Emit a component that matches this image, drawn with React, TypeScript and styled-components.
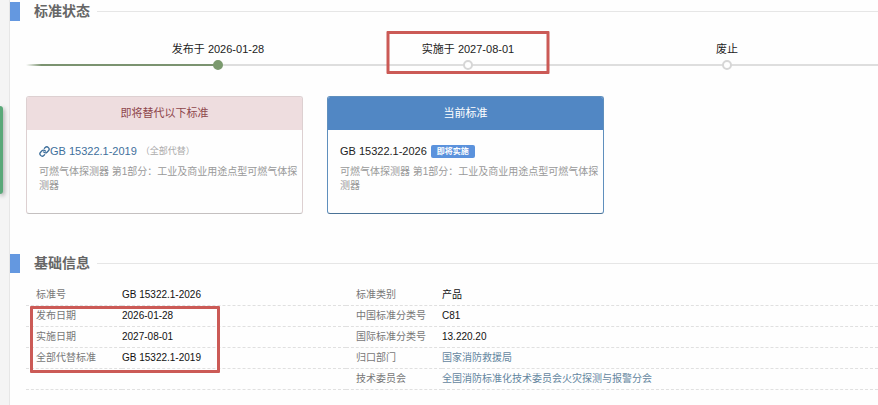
import React from "react";
import styled, { createGlobalStyle } from "styled-components";
import { Link } from "lucide-react";

const GlobalStyle = createGlobalStyle`
  *, *::before, *::after { box-sizing: border-box; }
  body {
    margin: 0;
    background: #f4f4f4;
    color: #222;
    font-family: "Liberation Sans", "Noto Sans CJK SC", sans-serif;
    font-size: 11px;
  }
  a { text-decoration: none; }
  a:hover { text-decoration: underline; }
`;

const Page = styled.div`
  position: relative;
  min-height: 100vh;
  padding-left: 9px;
  overflow: hidden;
`;

const SideTab = styled.button`
  position: absolute;
  left: 0;
  top: 106px;
  width: 3px;
  height: 88px;
  padding: 0;
  border: 0;
  border-radius: 0 3px 3px 0;
  background: #59a878;
  box-shadow: 1px 2px 4px rgba(0, 0, 0, 0.4);
`;

const Panel = styled.main`
  min-height: 100vh;
  padding-top: 1px;
  border-left: 1px solid #e6e6e6;
  background: #fefefe;
`;

const SectionHeader = styled.header`
  display: flex;
  align-items: center;
  height: 20px;

  &::before {
    content: "";
    width: 10px;
    height: 19px;
    margin-right: 14px;
    background: #6498e0;
  }

  &::after {
    content: "";
    flex: 1;
    height: 1px;
    margin-left: 7px;
    background: #e6e6e6;
  }
`;

const SectionTitle = styled.h2`
  margin: 0;
  color: #666;
  font-size: 14px;
  line-height: 20px;
`;

const SectionBody = styled.div`
  padding-left: 16px;
`;

const Timeline = styled.ol`
  position: relative;
  display: grid;
  grid-template-columns: 250fr 250fr 268fr;
  margin: 0;
  padding: 20px 17px 0 67px;
  list-style: none;
`;

const Track = styled.li<{ $done?: boolean }>`
  position: absolute;
  left: 0;
  bottom: 4px;
  width: ${(p) => (p.$done ? "192px" : "100%")};
  height: 2px;
  background: ${(p) => (p.$done ? "linear-gradient(to right, #fefefe, #7b9370 8%)" : "#dedede")};
`;

const Step = styled.li`
  position: relative;
  display: flex;
  flex-direction: column;
  align-items: center;
  gap: 3px;
  line-height: 16px;
`;

const Dot = styled.span<{ $done?: boolean }>`
  width: 10px;
  height: 10px;
  border: 2px solid ${(p) => (p.$done ? "#7b9a6e" : "#d6d6d6")};
  border-radius: 50%;
  background: ${(p) => (p.$done ? "#7b9a6e" : "#fefefe")};
`;

const StepMark = styled.span`
  position: absolute;
  left: 50%;
  top: -10px;
  width: 163px;
  height: 43px;
  transform: translateX(-50%);
  border: 3px solid #cb5a56;
  border-radius: 1px;
`;

const Cards = styled.div`
  display: flex;
  gap: 24px;
  padding: 26px 16px 39px 0;
`;

const Card = styled.article<{ $current?: boolean }>`
  flex: 0 1 277px;
  min-height: 118px;
  border: 1px solid ${(p) => (p.$current ? "#5f8fbd" : "#ddd0d1")};
  border-bottom-color: ${(p) => (p.$current ? "#4a7296" : "#c4c0c0")};
  border-radius: 3px;
  overflow: hidden;
`;

const CardTitle = styled.h3<{ $current?: boolean }>`
  margin: 0;
  background: ${(p) => (p.$current ? "#5187c4" : "#eedddf")};
  color: ${(p) => (p.$current ? "#fff" : "#8e474c")};
  font-size: 11px;
  font-weight: 400;
  line-height: 33px;
  text-align: center;
`;

const CardBody = styled.div`
  padding: 13px 3px 0 12px;
`;

const CodeLine = styled.div`
  display: flex;
  align-items: center;
  height: 16px;
  line-height: 16px;
`;

const CodeLink = styled.a`
  display: flex;
  align-items: center;
  color: #3f709c;
`;

const Note = styled.span`
  margin-left: 4px;
  color: #aaa;
  font-size: 9px;
`;

const Badge = styled.span`
  margin-left: 4px;
  padding: 0 6px;
  border-radius: 2px;
  background: #5b92dc;
  color: #fff;
  font-size: 8px;
  font-weight: 700;
  line-height: 13px;
`;

const Description = styled.p`
  margin: 6px 0 0;
  color: #999;
  font-size: 10px;
  line-height: 14px;
`;

const InfoArea = styled.div`
  position: relative;
  padding: 12px 0 0 16px;
`;

const InfoTable = styled.table`
  width: 100%;
  border-collapse: separate;
  border-spacing: 0;
  table-layout: fixed;
  font-size: 10px;
  line-height: 20px;

  th, td {
    height: 21px;
    padding: 0;
    border-bottom: 1px dashed #e0e0e0;
    text-align: left;
    font-weight: 400;
    white-space: nowrap;
  }
  th { padding-left: 10px; color: #777; }
  td { color: #111; }
`;

const LabelCol = styled.col`
  width: 96px;
`;

const ValueCol = styled.col<{ $first?: boolean }>`
  width: ${(p) => (p.$first ? "224px" : "auto")};
`;

const ValueLink = styled.a`
  color: #64869f;
`;

const TableMark = styled.span`
  position: absolute;
  left: 20px;
  top: 33px;
  width: 190px;
  height: 67px;
  border: 3px solid #cb5a56;
  border-radius: 1px;
`;

const steps = [
  { label: "发布于 2026-01-28", done: true },
  { label: "实施于 2027-08-01", marked: true },
  { label: "废止" },
];

const rows = [
  ["标准号", "GB 15322.1-2026", "标准类别", "产品"],
  ["发布日期", "2026-01-28", "中国标准分类号", "C81"],
  ["实施日期", "2027-08-01", "国际标准分类号", "13.220.20"],
  ["全部代替标准", "GB 15322.1-2019", "归口部门", "国家消防救援局", "link"],
  ["", "", "技术委员会", "全国消防标准化技术委员会火灾探测与报警分会", "link"],
];

const productName = "可燃气体探测器 第1部分：工业及商业用途点型可燃气体探测器";

export default function App() {
  return (
    <Page lang="zh-CN">
      <GlobalStyle />
      <Panel>
        <section>
          <SectionHeader>
            <SectionTitle>标准状态</SectionTitle>
          </SectionHeader>
          <SectionBody>
            <Timeline>
              <Track aria-hidden="true" />
              <Track $done aria-hidden="true" />
              {steps.map((step) => (
                <Step key={step.label}>
                  {step.label}
                  <Dot $done={step.done} />
                  {step.marked && <StepMark />}
                </Step>
              ))}
            </Timeline>
            <Cards>
              <Card>
                <CardTitle>即将替代以下标准</CardTitle>
                <CardBody>
                  <CodeLine>
                    <CodeLink href="#replaced">
                      <Link size={11} strokeWidth={3} aria-hidden="true" />
                      GB 15322.1-2019
                    </CodeLink>
                    <Note>（全部代替）</Note>
                  </CodeLine>
                  <Description>{productName}</Description>
                </CardBody>
              </Card>
              <Card $current>
                <CardTitle $current>当前标准</CardTitle>
                <CardBody>
                  <CodeLine>
                    GB 15322.1-2026
                    <Badge>即将实施</Badge>
                  </CodeLine>
                  <Description>{productName}</Description>
                </CardBody>
              </Card>
            </Cards>
          </SectionBody>
        </section>
        <section>
          <SectionHeader>
            <SectionTitle>基础信息</SectionTitle>
          </SectionHeader>
          <InfoArea>
            <InfoTable>
              <colgroup>
                <LabelCol />
                <ValueCol $first />
                <LabelCol />
                <ValueCol />
              </colgroup>
              <tbody>
                {rows.map(([label, value, label2, value2, kind]) => (
                  <tr key={label2}>
                    {label ? <th scope="row">{label}</th> : <td />}
                    <td>{value}</td>
                    <th scope="row">{label2}</th>
                    <td>{kind ? <ValueLink href="#org">{value2}</ValueLink> : value2}</td>
                  </tr>
                ))}
              </tbody>
            </InfoTable>
            <TableMark />
          </InfoArea>
        </section>
      </Panel>
      <SideTab aria-label="打开侧栏" />
    </Page>
  );
}
